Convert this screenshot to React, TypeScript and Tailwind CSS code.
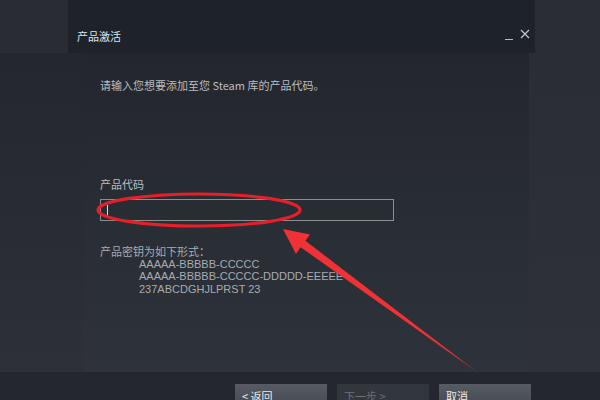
const cjk = "font-['Noto_Sans_CJK_SC','Liberation_Sans',sans-serif]";

function Button({ label, disabled }: { label: string; disabled?: boolean }) {
  return (
    <div
      className={
        "w-[92px] h-[30px] shrink-0 pl-[7px] pt-[5px] text-[11px] leading-[14px] " +
        (disabled
          ? "bg-[#32363d] text-[#6c7077]"
          : "bg-gradient-to-b from-[#565b64] to-[#40444c] text-[#eceded]")
      }
    >
      {label}
    </div>
  );
}

export default function App() {
  return (
    <div className={`w-[600px] h-[400px] bg-[#2a2d33] overflow-hidden relative flex flex-col ${cjk}`}>
      {/* Title bar */}
      <div className="flex h-[53px] shrink-0">
        <div className="w-[68px] bg-[#292c32]" />
        <div className="w-[467px] bg-[#1e232b] flex items-start justify-between pl-[9px] pr-[5px] pt-[29px]">
          <span className="text-[11px] leading-[14px] text-[#dfe3e8]">产品激活</span>
          <div className="flex items-start gap-[7px] pt-[1px]">
            <svg width="8" height="10" viewBox="0 0 8 10" className="mt-[1px]">
              <rect x="0" y="8" width="8" height="1" fill="#b7b9bc" />
            </svg>
            <svg width="10" height="10" viewBox="0 0 10 10" className="-mt-[1px]">
              <path d="M1 1L9 9M9 1L1 9" stroke="#c5c7ca" strokeWidth="1.2" />
            </svg>
          </div>
        </div>
        <div className="flex-1 bg-[#2a2d33]" />
      </div>

      {/* Body */}
      <div className="flex h-[319px] shrink-0">
        <div className="w-[83px] bg-gradient-to-b from-[#24272d] to-[#2d3038]" />
        <div className="w-[446px] bg-gradient-to-b from-[#23272d] to-[#2e323a] pl-[17px] pt-[25px]">
          <div className="text-[11px] leading-[14px] text-[#b9bdc1]">
            请输入您想要添加至您 Steam 库的产品代码。
          </div>
          <div className="mt-[85px] text-[11px] leading-[14px] text-[#b9bdc1]">产品代码</div>
          <div className="mt-[8px] w-[294px] h-[22px] border border-[#8a8d92] flex items-center pl-[6px]">
            <div className="w-[1px] h-[11px] bg-[#d8d8d8]" />
          </div>
          <div className="mt-[24px] text-[11px] leading-[12.5px] text-[#a7acb2]">
            <div>产品密钥为如下形式：</div>
            <div className="pl-[39px] font-['Liberation_Sans',sans-serif]">
              <div>AAAAA-BBBBB-CCCCC</div>
              <div>AAAAA-BBBBB-CCCCC-DDDDD-EEEEE</div>
              <div>237ABCDGHJLPRST 23</div>
            </div>
          </div>
        </div>
        <div className="flex-1 bg-gradient-to-b from-[#2a2d33] to-[#2e3139]" />
      </div>

      {/* Footer */}
      <div className="h-[28px] shrink-0 overflow-hidden bg-[#24272d] pl-[235px] pt-[12px] flex gap-[10px]">
        <Button label="< 返回" />
        <Button label="下一步 >" disabled />
        <Button label="取消" />
      </div>

      {/* Annotation */}
      <svg className="absolute inset-0 pointer-events-none" width="600" height="400" viewBox="0 0 600 400">
        <ellipse cx="199" cy="210" rx="101" ry="16" fill="none" stroke="#e61f29" strokeWidth="3.2" />
        <polygon
          points="283,229 310,234.5 305.4,240.8 477,372 300.6,247.2 296,254"
          fill="#f03236"
        />
      </svg>
    </div>
  );
}
